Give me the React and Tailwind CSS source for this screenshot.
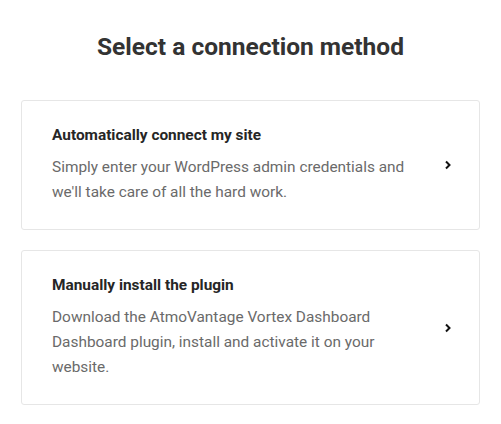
const methods = [
  {
    title: "Automatically connect my site",
    body: "Simply enter your WordPress admin credentials and we'll take care of all the hard work.",
  },
  {
    title: "Manually install the plugin",
    body: "Download the AtmoVantage Vortex Dashboard Dashboard plugin, install and activate it on your website.",
  },
];

function Chevron() {
  return (
    <svg width="8" height="10" viewBox="0 0 8 10" className="shrink-0">
      <polyline points="2,1.5 5.5,5 2,8.5" fill="none" stroke="#111" strokeWidth="2" />
    </svg>
  );
}

export default function App() {
  return (
    <div className="min-h-screen bg-white px-[21px] pt-[31px]" style={{ fontFamily: "Roboto, 'Liberation Sans', sans-serif" }}>
      <h1 className="text-center text-[24.5px] leading-[32px] font-bold text-[#333333] mb-[37px]">
        Select a connection method
      </h1>
      <div className="flex flex-col gap-[20px]">
        {methods.map((m) => (
          <button
            key={m.title}
            className="flex items-center text-left border border-[#e6e6e6] rounded-[3px] pl-[30px] pr-[27px] pt-[24px] pb-[24px]"
          >
            <div className="flex-1 pr-[36px]">
              <p className="text-[15.4px] leading-[20px] font-bold text-[#262626]">{m.title}</p>
              <p className="mt-[10px] text-[15.4px] leading-[25px] text-[#6a6a6a]">{m.body}</p>
            </div>
            <Chevron />
          </button>
        ))}
      </div>
    </div>
  );
}
